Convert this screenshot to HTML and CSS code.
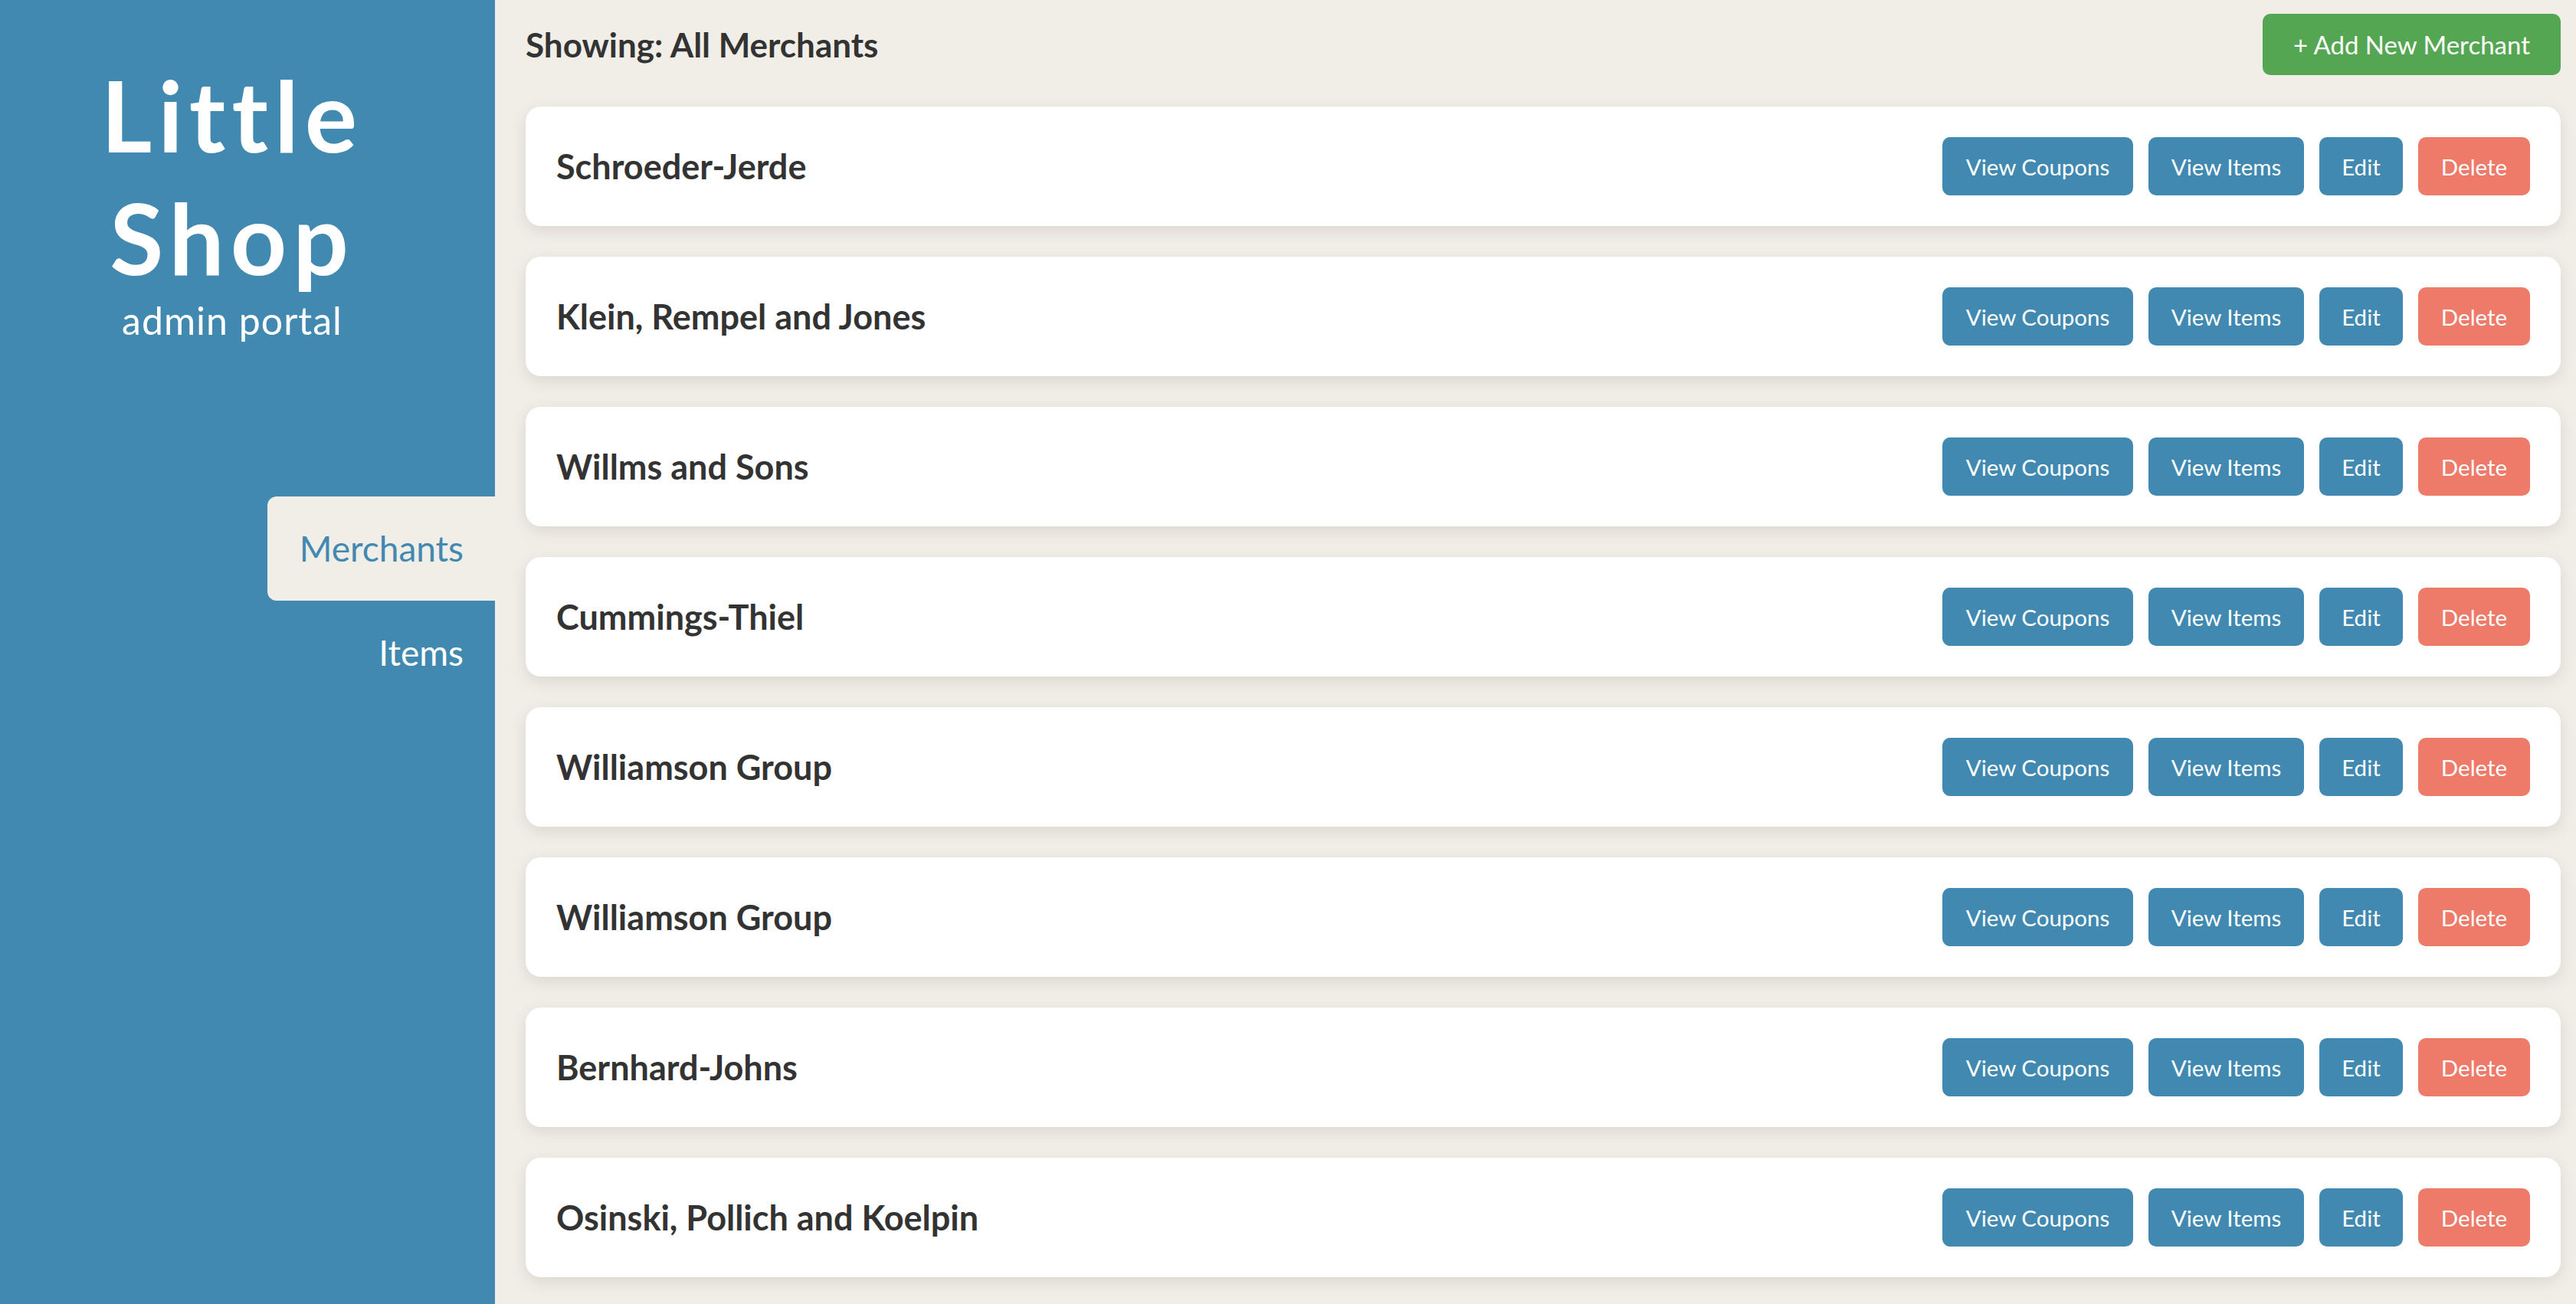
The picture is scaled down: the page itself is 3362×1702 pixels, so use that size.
FILE: index.html
```html
<!DOCTYPE html>
<html lang="en">
<head>
<meta charset="utf-8">
<title>Little Shop admin portal</title>
<link rel="stylesheet" href="styles.css">
</head>
<body>
<div class="layout">
  <aside class="sidebar">
    <div class="brand">
      <h1 class="brand-title">Little<br>Shop</h1>
      <p class="brand-sub">admin portal</p>
    </div>
    <nav class="nav">
      <a class="nav-item active" href="#">Merchants</a>
      <a class="nav-item" href="#">Items</a>
    </nav>
  </aside>
  <main class="main">
    <header class="topbar">
      <h2 class="showing">Showing: All Merchants</h2>
      <button class="btn btn-green">+ Add New Merchant</button>
    </header>
    <section class="list">
      <div class="card"><h3 class="card-title">Schroeder-Jerde</h3><div class="actions"><button class="btn btn-blue">View Coupons</button><button class="btn btn-blue">View Items</button><button class="btn btn-blue">Edit</button><button class="btn btn-red">Delete</button></div></div>
      <div class="card"><h3 class="card-title">Klein, Rempel and Jones</h3><div class="actions"><button class="btn btn-blue">View Coupons</button><button class="btn btn-blue">View Items</button><button class="btn btn-blue">Edit</button><button class="btn btn-red">Delete</button></div></div>
      <div class="card"><h3 class="card-title">Willms and Sons</h3><div class="actions"><button class="btn btn-blue">View Coupons</button><button class="btn btn-blue">View Items</button><button class="btn btn-blue">Edit</button><button class="btn btn-red">Delete</button></div></div>
      <div class="card"><h3 class="card-title">Cummings-Thiel</h3><div class="actions"><button class="btn btn-blue">View Coupons</button><button class="btn btn-blue">View Items</button><button class="btn btn-blue">Edit</button><button class="btn btn-red">Delete</button></div></div>
      <div class="card"><h3 class="card-title">Williamson Group</h3><div class="actions"><button class="btn btn-blue">View Coupons</button><button class="btn btn-blue">View Items</button><button class="btn btn-blue">Edit</button><button class="btn btn-red">Delete</button></div></div>
      <div class="card"><h3 class="card-title">Williamson Group</h3><div class="actions"><button class="btn btn-blue">View Coupons</button><button class="btn btn-blue">View Items</button><button class="btn btn-blue">Edit</button><button class="btn btn-red">Delete</button></div></div>
      <div class="card"><h3 class="card-title">Bernhard-Johns</h3><div class="actions"><button class="btn btn-blue">View Coupons</button><button class="btn btn-blue">View Items</button><button class="btn btn-blue">Edit</button><button class="btn btn-red">Delete</button></div></div>
      <div class="card"><h3 class="card-title">Osinski, Pollich and Koelpin</h3><div class="actions"><button class="btn btn-blue">View Coupons</button><button class="btn btn-blue">View Items</button><button class="btn btn-blue">Edit</button><button class="btn btn-red">Delete</button></div></div>
    </section>
  </main>
</div>
</body>
</html>
```

FILE: styles.css
```css
html, body {
  margin: 0;
  padding: 0;
  height: 100%;
  overflow: hidden;
}
body {
  font-family: "Lato", "Noto Sans", sans-serif;
  background: #f1eee8;
  color: #333333;
}
.layout {
  display: flex;
  height: 100vh;
}
.sidebar {
  width: 646px;
  flex: 0 0 646px;
  background: #4189b0;
  color: #ffffff;
  display: flex;
  flex-direction: column;
}
.brand {
  width: 606px;
  text-align: center;
  padding-top: 70px;
}
.brand-title {
  margin: 0;
  font-size: 128px;
  line-height: 160px;
  font-weight: 700;
  letter-spacing: 8px;
}
.brand-sub {
  margin: -2px 0 0;
  font-size: 50px;
  line-height: 60px;
  font-weight: 400;
  letter-spacing: 1px;
}
.nav {
  margin-top: 200px;
  display: flex;
  flex-direction: column;
  align-items: flex-end;
}
.nav-item {
  display: block;
  width: 297px;
  box-sizing: border-box;
  height: 136px;
  line-height: 136px;
  padding-right: 41px;
  text-align: right;
  font-size: 46px;
  color: #ffffff;
  text-decoration: none;
  border-radius: 12px 0 0 12px;
}
.nav-item.active {
  background: #f1eee8;
  color: #4189b0;
}
.main {
  flex: 1;
  padding: 18px 20px 0 40px;
  display: flex;
  flex-direction: column;
}
.topbar {
  display: flex;
  align-items: center;
  justify-content: space-between;
  height: 80px;
}
.showing {
  margin: 0;
  font-size: 44px;
  font-weight: 700;
  color: #333333;
}
.btn {
  font-family: inherit;
  border: none;
  color: #ffffff;
  cursor: pointer;
  border-radius: 10px;
}
.btn-green {
  background: #55a653;
  height: 80px;
  width: 389px;
  font-size: 33px;
}
.list {
  margin-top: 41px;
  display: flex;
  flex-direction: column;
  gap: 40px;
}
.card {
  height: 156px;
  box-sizing: border-box;
  background: #ffffff;
  border-radius: 20px;
  padding: 0 40px;
  display: flex;
  align-items: center;
  justify-content: space-between;
  box-shadow: 0 6px 20px rgba(60, 50, 30, 0.12);
}
.card-title {
  margin: 0;
  font-size: 45px;
  font-weight: 700;
  color: #333333;
}
.actions {
  display: flex;
  gap: 20px;
}
.actions .btn {
  height: 76px;
  font-size: 29.5px;
  padding: 0;
}
.actions .btn:nth-child(1) { width: 249px; }
.actions .btn:nth-child(2) { width: 203px; }
.actions .btn:nth-child(3) { width: 109px; }
.actions .btn:nth-child(4) { width: 146px; }
.btn-blue {
  background: #4189b0;
}
.btn-red {
  background: #ee7a69;
}
```
